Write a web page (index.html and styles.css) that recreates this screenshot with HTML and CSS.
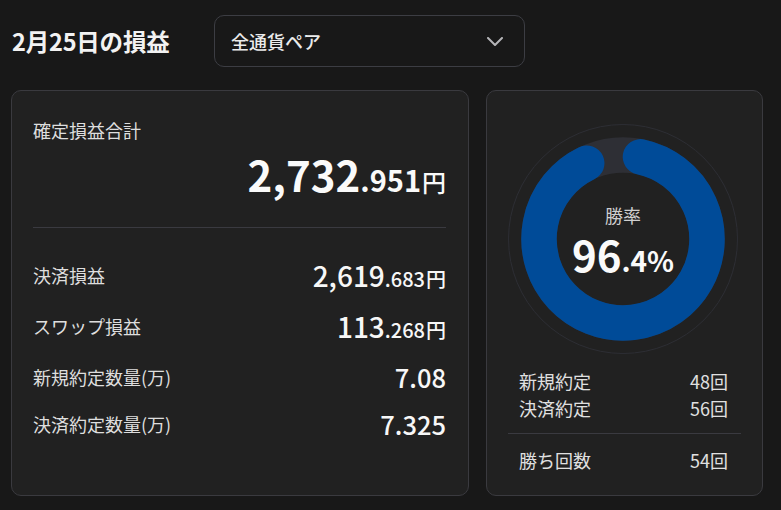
FILE: index.html
```html
<!DOCTYPE html>
<html lang="ja">
<head>
<meta charset="utf-8">
<title>損益</title>
<link rel="stylesheet" href="styles.css">
</head>
<body>
<header class="header">
  <h1 class="title">2月25日の損益</h1>
  <div class="select">
    <span class="select-text">全通貨ペア</span>
    <svg class="chevron" width="16" height="9" viewBox="0 0 16 9"><path d="M1 1 L8 8 L15 1" fill="none" stroke="currentColor" stroke-width="2" stroke-linecap="round" stroke-linejoin="round"/></svg>
  </div>
</header>
<main class="main">
  <section class="card left">
    <div class="label">確定損益合計</div>
    <div class="total"><span class="t-int">2,732</span><span class="t-dec">.951</span><span class="t-yen">円</span></div>
    <div class="divider"></div>
    <div class="rows">
      <div class="row"><span class="row-label">決済損益</span><span class="row-val"><span class="v-int">2,619</span><span class="v-dec">.683</span><span class="v-yen">円</span></span></div>
      <div class="row"><span class="row-label">スワップ損益</span><span class="row-val"><span class="v-int">113</span><span class="v-dec">.268</span><span class="v-yen">円</span></span></div>
      <div class="row"><span class="row-label">新規約定数量(万)</span><span class="row-val plain">7.08</span></div>
      <div class="row last"><span class="row-label">決済約定数量(万)</span><span class="row-val plain">7.325</span></div>
    </div>
  </section>
  <section class="card right">
    <div class="donut">
      <svg class="donut-svg" width="230" height="230" viewBox="0 0 230 230">
        <circle cx="115" cy="115" r="114.5" fill="none" stroke="#2d2e34" stroke-width="1"/>
        <circle cx="115" cy="115" r="84" fill="none" stroke="#2e2f35" stroke-width="35.5"/>
        <path d="M132.47 32.84 A84 84 0 1 1 78.70 39.25" fill="none" stroke="#004b98" stroke-width="35.5" stroke-linecap="round"/>
      </svg>
      <div class="donut-text">
        <div class="donut-label">勝率</div>
        <div class="donut-val"><span class="d-int">96</span><span class="d-dec">.4%</span></div>
      </div>
    </div>
    <div class="stats">
      <div class="srow"><span>新規約定</span><span>48回</span></div>
      <div class="srow"><span>決済約定</span><span>56回</span></div>
      <div class="sdivider"></div>
      <div class="srow third"><span>勝ち回数</span><span>54回</span></div>
    </div>
  </section>
</main>
</body>
</html>
```

FILE: styles.css
```css
* { box-sizing: border-box; }
html, body { margin: 0; padding: 0; }
body {
  background: #181818;
  color: #e6e6e6;
  font-family: "Noto Sans CJK JP", "Noto Sans", sans-serif;
  width: 781px;
  height: 510px;
  overflow: hidden;
}
.header {
  display: grid;
  grid-template-columns: 202px 311px;
  align-items: center;
  padding: 15px 0 0 12px;
}
.title {
  margin: 0;
  font-size: 23.5px;
  font-weight: 700;
  color: #f2f2f2;
  line-height: 30px;
  letter-spacing: -0.2px;
}
.select {
  height: 52px;
  border: 1.5px solid #3c3d43;
  border-radius: 10px;
  display: flex;
  align-items: center;
  justify-content: space-between;
  padding: 0 21px 0 16px;
}
.select-text {
  font-size: 18px;
  color: #ebebeb;
  font-weight: 500;
}
.chevron { color: #b5b5b8; display: block; }
.main {
  display: flex;
  gap: 17px;
  padding: 23px 0 0 11px;
}
.card {
  background: #212121;
  border: 1px solid #3a3a3f;
  border-radius: 10px;
  height: 406px;
}
.left {
  width: 458px;
  padding: 27px 22px 0 21px;
}
.label {
  font-size: 18px;
  line-height: 24px;
  color: #dedede;
}
.total {
  margin-top: 8px;
  text-align: right;
  font-size: 42px;
  line-height: 48px;
  color: #fafafa;
  font-weight: 700;
}
.t-int { font-size: 42px; }
.t-dec { font-size: 29px; line-height: 1; }
.t-yen { font-size: 24px; line-height: 1; font-weight: 500; margin-left: 1px; }
.divider {
  margin-top: 29px;
  height: 1px;
  background: #3a3a40;
}
.rows { margin-top: 21px; }
.row {
  height: 51px;
  display: flex;
  align-items: center;
  justify-content: space-between;
}
.row.last { height: 43px; }
.row-label {
  font-size: 18px;
  color: #dedede;
}
.row-val { color: #f7f7f7; font-weight: 500; line-height: 1; font-size: 28px; }
.row-val.plain { font-size: 25.5px; }
.v-int { font-size: 28px; }
.v-dec { font-size: 20px; }
.v-yen { font-size: 20px; margin-left: 1px; }
.right {
  width: 277px;
  padding: 33px 0 0 21px;
}
.donut {
  display: grid;
  width: 230px;
  height: 230px;
}
.donut-svg, .donut-text { grid-area: 1 / 1; }
.donut-svg { display: block; }
.donut-text {
  display: flex;
  flex-direction: column;
  align-items: center;
  justify-content: center;
  padding-top: 4px;
}
.donut-label {
  font-size: 18px;
  line-height: 22px;
  color: #cfcfcf;
}
.donut-val {
  margin-top: 4px;
  font-size: 42px;
  line-height: 48px;
  font-weight: 700;
  color: #fafafa;
}
.d-int { font-size: 42px; }
.d-dec { font-size: 28px; line-height: 1; }
.stats {
  margin-top: 14px;
  width: 233px;
}
.srow {
  display: flex;
  justify-content: space-between;
  padding: 0 13px 0 11px;
  font-size: 18px;
  line-height: 27px;
  color: #e0e0e0;
}
.sdivider {
  margin-top: 11px;
  height: 1px;
  background: #3a3a40;
}
.srow.third { margin-top: 13px; }
```
